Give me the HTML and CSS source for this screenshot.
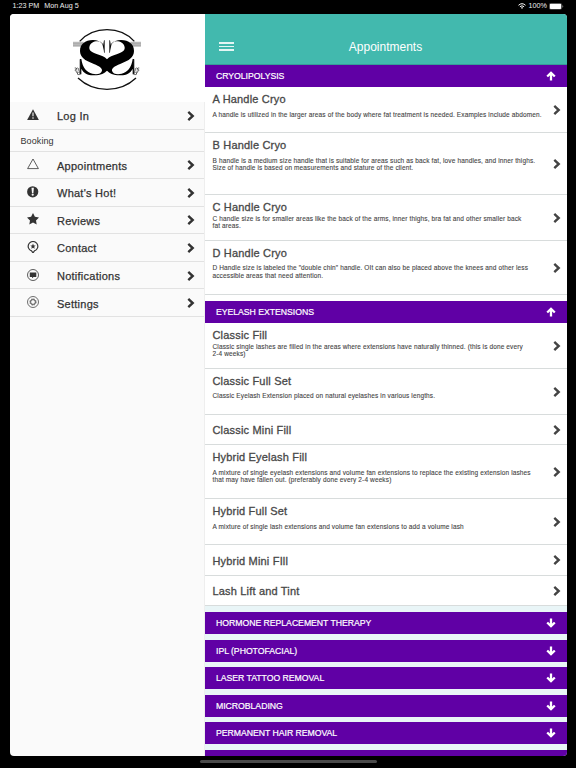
FILE: index.html
```html
<!DOCTYPE html>
<html lang="en">
<head>
  <meta charset="UTF-8" />
  <meta name="viewport" content="width=device-width, initial-scale=1.0" />
  <title>Appointments</title>
  <link rel="stylesheet" href="styles.css">
</head>
<body>
  <svg class="sprite" xmlns="http://www.w3.org/2000/svg">
    <symbol id="chevron" viewBox="0 0 8 10"><path d="M1.300 .9 5.700 5 1.300 9.100" fill="none" stroke="currentColor" stroke-width="2.400"/></symbol>
    <symbol id="up" viewBox="0 0 10 10"><path d="M5 9.400V2M1.200 5.500 5 1.800l3.800 3.700" fill="none" stroke="currentColor" stroke-width="2.300"/></symbol>
    <symbol id="down" viewBox="0 0 10 10"><path d="M5 .6V8M1.200 4.500 5 8.200l3.800-3.700" fill="none" stroke="currentColor" stroke-width="2.300"/></symbol>
  </svg>

  <div class="status">
    <span class="time">1:23 PM</span>
    <span class="date">Mon Aug 5</span>
    <svg class="wifi" viewBox="0 0 8 6"><g fill="none" stroke="#fff" stroke-width="1"><path d="M.5 2.3Q4-.9 7.500 2.300"/><path d="M1.900 3.700Q4 1.900 6.100 3.700"/></g><path d="M2.900 4.600Q4 3.700 5.100 4.600L4 5.900Z" fill="#fff"/></svg>
    <span class="percent">100%</span>
    <svg class="battery" viewBox="0 0 15 7"><rect x=".25" y=".25" width="12.5" height="6.2" rx="1.600" fill="none" stroke="#777" stroke-width=".5"/><rect x=".8" y=".8" width="11.400" height="5.100" rx="1" fill="#fff"/><path d="M13.300 2.300v2.200q1-.3 1-1.100t-1-1.100" fill="#777"/></svg>
  </div>

  <div class="app">
    <nav class="sidebar">
      <div class="logo">
        <svg viewBox="0 0 255 216">
          <g fill="none" stroke="#111" stroke-width="4">
            <path d="M44 58Q76 23 126 23T208 58"/>
            <path d="M39 168Q75 202 126 202T213 168"/>
          </g>
          <g id="half">
            <path d="M24 67H56" stroke="#bbb" stroke-width="15"/>
            <path d="M24 64H56M24 70H56" stroke="#999" stroke-width="1.500"/>
            <path d="M117 92C117 84 114 78 114 72L117 55H119V92ZM114 66C106 57 96 54 84 54C60 54 45 66 45 87C45 107 62 116 80 123C98 130 112 137 111 146C109 157 93 158 82 155C65 151 53 138 49 111H45V157H49V140C56 154 70 161 87 160C108 160 119 153 126 146V112C119 104 109 101 97 97C80 91 72 86 73 76C75 63 86 58 97 58C107 58 113 64 114 74Z" fill="#000"/>
            <path d="M45 112V158M48 147Q40 151 41 140Q36 135 33 141Q29 143 31 147Q37 145 37 152Q36 160 43 158Q49 153 42 151M29 138Q34 134 36 145M34 151Q38 158 41 149" fill="none" stroke="#333" stroke-width="2"/>
          </g>
          <use href="#half" transform="matrix(-1 0 0 1 252 0)"/>
        </svg>
      </div>
      <a class="menu-item first">
        <svg class="icon" viewBox="0 0 12 12"><path d="M6 .3 11.900 11H.1Z" fill="currentColor"/><path d="M6 3.600v3.600M6 8.200v1.500" stroke="#fafafa" stroke-width="1.100"/></svg>
        <span>Log In</span><svg class="chevron"><use href="#chevron"/></svg>
      </a>
      <div class="divider">Booking</div>
      <a class="menu-item">
        <svg class="icon" viewBox="0 0 12 12"><path d="M6 1 11.400 10.600H.6Z" fill="none" stroke="currentColor" stroke-width=".8"/></svg>
        <span>Appointments</span><svg class="chevron"><use href="#chevron"/></svg>
      </a>
      <a class="menu-item">
        <svg class="icon" viewBox="0 0 12 12"><circle cx="5.700" cy="5.800" r="5.600" fill="currentColor"/><path d="M4.500 1.800h2.400L6.400 7H5Z" fill="#fafafa"/><circle cx="5.700" cy="8.700" r="1.100" fill="#fafafa"/></svg>
        <span>What's Hot!</span><svg class="chevron"><use href="#chevron"/></svg>
      </a>
      <a class="menu-item">
        <svg class="icon" viewBox="0 0 12 12"><path d="M6 0 7.900 3.800 12 4.400 9 7.400 9.700 11.600 6 9.600 2.300 11.600 3 7.400 0 4.400 4.100 3.800Z" fill="currentColor"/></svg>
        <span>Reviews</span><svg class="chevron"><use href="#chevron"/></svg>
      </a>
      <a class="menu-item">
        <svg class="icon" viewBox="0 0 12 12"><path d="M6 11.900 4.600 9.900A4.800 4.800 0 1 1 7.400 9.900Z" fill="none" stroke="currentColor" stroke-width="1.200"/><path d="M6 2.600 6.800 4.400 8.700 4.500 7.200 5.800 7.700 7.700 6 6.700 4.300 7.700 4.800 5.800 3.300 4.500 5.200 4.400Z" fill="currentColor"/></svg>
        <span>Contact</span><svg class="chevron"><use href="#chevron"/></svg>
      </a>
      <a class="menu-item">
        <svg class="icon" viewBox="0 0 12 12"><circle cx="6" cy="6" r="5.500" fill="none" stroke="currentColor" stroke-width=".8"/><path d="M2.800 3.600H9.300V8H6.500L5 9.300V8H2.800Z" fill="currentColor"/></svg>
        <span>Notifications</span><svg class="chevron"><use href="#chevron"/></svg>
      </a>
      <a class="menu-item">
        <svg class="icon" viewBox="0 0 12 12"><g fill="none" stroke="currentColor"><circle cx="6" cy="6" r="5.500" stroke-width=".7"/><circle cx="6" cy="6" r="3.100" stroke-width=".7" stroke-dasharray="1.600 .83"/><circle cx="6" cy="6" r="2.400" stroke-width=".8"/></g></svg>
        <span>Settings</span><svg class="chevron"><use href="#chevron"/></svg>
      </a>
    </nav>

    <main class="content">
      <header class="topbar">
        <div class="burger"><i></i><i></i><i></i></div>
        <h1>Appointments</h1>
      </header>

      <section class="open">
        <h2 class="group"><span>CRYOLIPOLYSIS</span><svg><use href="#up"/></svg></h2>
        <div class="service h46">
          <div class="text"><h3>A Handle Cryo</h3><p>A handle is utilized in the larger areas of the body where fat treatment is needed. Examples include abdomen.</p></div>
          <svg class="chevron"><use href="#chevron"/></svg>
        </div>
        <div class="service h61">
          <div class="text"><h3>B Handle Cryo</h3><p>B handle is a medium size handle that is suitable for areas such as back fat, love handles, and inner thighs.<br>Size of handle is based on measurements and stature of the client.</p></div>
          <svg class="chevron"><use href="#chevron"/></svg>
        </div>
        <div class="service h46 tight">
          <div class="text"><h3>C Handle Cryo</h3><p>C handle size is for smaller areas like the back of the arms, inner thighs, bra fat and other smaller back<br>fat areas.</p></div>
          <svg class="chevron"><use href="#chevron"/></svg>
        </div>
        <div class="service h54">
          <div class="text"><h3>D Handle Cryo</h3><p>D Handle size is labeled the "double chin" handle. OIt can also be placed above the knees and other less<br>accessible areas that need attention.</p></div>
          <svg class="chevron"><use href="#chevron"/></svg>
        </div>
        <div class="spacer"></div>
      </section>

      <section class="open">
        <h2 class="group"><span>EYELASH EXTENSIONS</span><svg><use href="#up"/></svg></h2>
        <div class="service h46 tight">
          <div class="text"><h3>Classic Fill</h3><p>Classic single lashes are filled in the areas where extensions have naturally thinned. (this is done every<br>2-4 weeks)</p></div>
          <svg class="chevron"><use href="#chevron"/></svg>
        </div>
        <div class="service h46">
          <div class="text"><h3>Classic Full Set</h3><p>Classic Eyelash Extension placed on natural eyelashes in various lengths.</p></div>
          <svg class="chevron"><use href="#chevron"/></svg>
        </div>
        <div class="service single">
          <div class="text"><h3>Classic Mini Fill</h3></div>
          <svg class="chevron"><use href="#chevron"/></svg>
        </div>
        <div class="service h54">
          <div class="text"><h3>Hybrid Eyelash Fill</h3><p>A mixture of single eyelash extensions and volume fan extensions to replace the existing extension lashes<br>that may have fallen out. (preferably done every 2-4 weeks)</p></div>
          <svg class="chevron"><use href="#chevron"/></svg>
        </div>
        <div class="service h46">
          <div class="text"><h3>Hybrid Full Set</h3><p>A mixture of single lash extensions and volume fan extensions to add a volume lash</p></div>
          <svg class="chevron"><use href="#chevron"/></svg>
        </div>
        <div class="service single">
          <div class="text"><h3>Hybrid Mini FIll</h3></div>
          <svg class="chevron"><use href="#chevron"/></svg>
        </div>
        <div class="service single">
          <div class="text"><h3>Lash Lift and Tint</h3></div>
          <svg class="chevron"><use href="#chevron"/></svg>
        </div>
      </section>

      <section class="closed">
        <h2 class="group"><span>HORMONE REPLACEMENT THERAPY</span><svg><use href="#down"/></svg></h2>
        <h2 class="group"><span>IPL (PHOTOFACIAL)</span><svg><use href="#down"/></svg></h2>
        <h2 class="group"><span>LASER TATTOO REMOVAL</span><svg><use href="#down"/></svg></h2>
        <h2 class="group"><span>MICROBLADING</span><svg><use href="#down"/></svg></h2>
        <h2 class="group"><span>PERMANENT HAIR REMOVAL</span><svg><use href="#down"/></svg></h2>
        <h2 class="group"></h2>
      </section>
    </main>
  </div>
  <div class="home-bar"></div>
</body>
</html>
```
FILE: styles.css
```css
* {
  box-sizing: border-box;
}
body {
  margin: 0;
  width: 576px;
  height: 768px;
  overflow: hidden;
  background: #000;
  color: #333;
  font-family: "Liberation Sans", Arial, sans-serif;
}
h1, h2, h3, p {
  margin: 0;
  font-weight: normal;
}
.sprite {
  display: none;
}
svg {
  display: block;
  flex: none;
}

/* status bar */
.status {
  height: 14px;
  padding: 0 12px 2px 12.5px;
  display: flex;
  align-items: center;
  color: #eee;
  font-size: 7.2px;
  line-height: 12px;
}
.date {
  margin-left: 5px;
}
.wifi {
  width: 8px;
  height: 6px;
  margin-left: auto;
}
.percent {
  margin: 0 2px 0 3px;
}
.battery {
  width: 15px;
  height: 7px;
}

.app {
  display: flex;
  width: 557px;
  height: 742px;
  margin-left: 10px;
  border-radius: 4px;
  overflow: hidden;
}

/* side menu */
.sidebar {
  width: 195px;
  background: #fafafa;
  border-right: 1px solid #eee;
}
.logo {
  width: 195px;
  height: 88px;
  padding-top: 8px;
  background: #fff;
}
.logo svg {
  width: 85px;
  height: 72px;
  margin-left: 55px;
}
.menu-item {
  display: flex;
  align-items: center;
  height: 27.55px;
  padding: 0 9.5px 0 17px;
  border-bottom: 1px solid #e2e2e2;
  font-size: 11px;
  letter-spacing: 0.25px;
  -webkit-text-stroke: 0.25px #333;
}
.icon {
  width: 12px;
  height: 12px;
  margin: -1px 18px 0 0;
}
.menu-item span {
  padding-top: 2px;
}
.chevron {
  width: 8px;
  height: 10px;
  margin-left: auto;
  color: #333;
}
.menu-item .chevron {
  margin-top: 1px;
}
.divider {
  height: 22px;
  padding-left: 10.5px;
  border-bottom: 1px solid #e2e2e2;
  font-size: 9px;
  line-height: 23px;
  letter-spacing: 0.1px;
}

/* main column */
.content {
  width: 362px;
  background: #e9f5f7;
}
.topbar {
  display: flex;
  align-items: center;
  height: 51px;
  padding: 15px 0 0 14px;
  background: #42b9ae;
  border-bottom: 1px solid #379c98;
  color: #fff;
}
.burger {
  display: flex;
  flex-direction: column;
  gap: 2px;
  width: 15px;
}
.burger i {
  height: 1.6px;
  background: #e4f6f4;
}
.topbar h1 {
  flex: 1;
  margin-right: 30px;
  padding-top: 1px;
  text-align: center;
  font-size: 12px;
}
.group {
  display: flex;
  align-items: center;
  justify-content: space-between;
  height: 22px;
  padding: 0 11px;
  background: #6000a5;
  color: #fff;
  font-size: 8.7px;
  letter-spacing: -0.03px;
  -webkit-text-stroke: 0.2px #fff;
}
.group svg {
  width: 10px;
  height: 10px;
}
.open {
  padding-bottom: 6px;
}
.spacer {
  height: 6px;
  margin-bottom: -6px;
  background: #fff;
}
.service {
  display: flex;
  align-items: center;
  padding: 0 6.5px 0 7.5px;
  background: #fff;
  border-bottom: 1px solid #d8dcdc;
}
.service .text {
  align-self: flex-start;
  padding-top: 5px;
  white-space: nowrap;
}
.service .chevron {
  margin-top: 1px;
  color: #444;
}
.h46 {
  height: 46px;
}
.h54 {
  height: 54px;
}
.h61 {
  height: 61.5px;
}
.single {
  height: 30.5px;
}
.single .text {
  align-self: center;
  padding-top: 2px;
}
.service h3 {
  color: #484848;
  font-size: 11px;
  line-height: 14px;
  letter-spacing: 0.18px;
  -webkit-text-stroke: 0.3px #484848;
}
.service p {
  margin-top: 4.5px;
  color: #444;
  font-size: 6.5px;
  line-height: 7.8px;
  letter-spacing: 0.13px;
  -webkit-text-stroke: 0.1px #444;
}
.tight p {
  margin-top: 1px;
}
.closed {
  display: flex;
  flex-direction: column;
  gap: 5.5px;
}

.home-bar {
  width: 177px;
  height: 3px;
  margin: 4px auto 0;
  border-radius: 2px;
  background: #4a4a4a;
}
```
